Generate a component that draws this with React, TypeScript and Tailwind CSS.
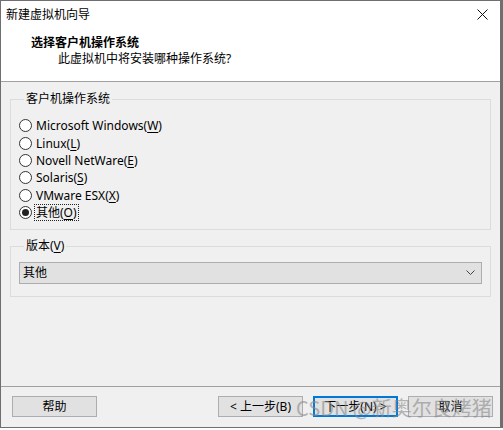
import { ReactNode } from "react";

// Windows-style "new virtual machine" wizard page

const FONT = "font-['Segoe_UI','Noto_Sans','Noto_Sans_CJK_SC',sans-serif]";

function Key({ children }: { children: ReactNode }) {
  return <span className="underline underline-offset-2 decoration-1">{children}</span>;
}

function Radio({ checked, children }: { checked?: boolean; children: ReactNode }) {
  return (
    <div className="h-[17.4px] flex items-center">
      <span className="w-[13px] h-[13px] rounded-full border border-[#333] bg-white flex items-center justify-center shrink-0">
        {checked && <span className="w-[7px] h-[7px] rounded-full bg-[#222]" />}
      </span>
      <span
        className={`ml-[3px] leading-[15px] px-[1px] ${
          checked ? "outline outline-1 outline-dotted outline-[#222]" : ""
        }`}
      >
        {children}
      </span>
    </div>
  );
}

function Button({ children, focused }: { children: ReactNode; focused?: boolean }) {
  return (
    <button
      className={`w-[85px] h-[21px] bg-[#e1e1e1] text-[12px] text-black flex items-center justify-center ${
        focused ? "border-2 border-[#0078d7]" : "border border-[#adadad]"
      }`}
    >
      {children}
    </button>
  );
}

export default function App() {
  return (
    <div className={`w-[503px] h-[430px] bg-white relative ${FONT} text-[12px] text-black`}>
      <div className="w-[503px] h-[428px] border-l border-t border-b border-r-[3px] border-[#6f6f6f] flex flex-col overflow-hidden">
        {/* title bar */}
        <div className="h-[27px] bg-white flex items-center justify-between pl-[5px] pr-[12px]">
          <span className="leading-[16px]">新建虚拟机向导</span>
          <svg width="11" height="11" viewBox="0 0 11 11" className="mt-[-1px]">
            <path d="M0.5 0.5L10.5 10.5M10.5 0.5L0.5 10.5" stroke="#111" strokeWidth="1" />
          </svg>
        </div>

        {/* page header */}
        <div className="h-[53px] bg-white pl-[30px] pt-[7px]">
          <div className="font-bold leading-[16px]">选择客户机操作系统</div>
          <div className="leading-[16px] pl-[27px]">此虚拟机中将安装哪种操作系统?</div>
        </div>
        <div className="h-px bg-[#a0a0a0]" />

        {/* body */}
        <div className="flex-1 bg-[#f0f0f0] flex flex-col px-[9px]">
          <fieldset className="mt-[9px] border border-[#dcdcdc] px-[8px] pb-[8px]">
            <legend className="ml-[5px] px-[2px] leading-[16px]">客户机操作系统</legend>
            <div className="pt-[10px] flex flex-col">
              <Radio>
                Microsoft Windows(<Key>W</Key>)
              </Radio>
              <Radio>
                Linux(<Key>L</Key>)
              </Radio>
              <Radio>
                Novell NetWare(<Key>E</Key>)
              </Radio>
              <Radio>
                Solaris(<Key>S</Key>)
              </Radio>
              <Radio>
                VMware ESX(<Key>X</Key>)
              </Radio>
              <Radio checked>
                其他(<Key>O</Key>)
              </Radio>
            </div>
          </fieldset>

          <fieldset className="mt-[8px] border border-[#dcdcdc] px-[8px] pb-[12px]">
            <legend className="ml-[5px] px-[2px] leading-[16px]">
              版本(<Key>V</Key>)
            </legend>
            <div className="mt-[8px] h-[22px] bg-[#e1e1e1] border border-[#adadad] flex items-center justify-between pl-[3px] pr-[6px]">
              <span>其他</span>
              <svg width="9" height="6" viewBox="0 0 9 6">
                <path d="M0.5 0.5L4.5 4.5L8.5 0.5" fill="none" stroke="#444" strokeWidth="1" />
              </svg>
            </div>
          </fieldset>

          <div className="flex-1" />
        </div>

        {/* footer */}
        <div className="h-px bg-[#a0a0a0]" />
        <div className="h-[40px] bg-[#f0f0f0] flex items-start pt-[9px] pl-[11px] pr-[7px]">
          <Button>帮助</Button>
          <div className="flex-1" />
          <div className="flex gap-[10px]">
            <Button>&lt; 上一步(B)</Button>
            <Button focused>下一步(N) &gt;</Button>
            <Button>取消</Button>
          </div>
        </div>
      </div>

      {/* watermark */}
      <div className="absolute left-[296px] top-[395px] text-[20px] leading-[26px] text-[#8a8a8a] opacity-60 font-['Noto_Sans_CJK_SC',sans-serif] whitespace-nowrap pointer-events-none">
        CSDN @新奥尔良烤猪
      </div>
    </div>
  );
}
